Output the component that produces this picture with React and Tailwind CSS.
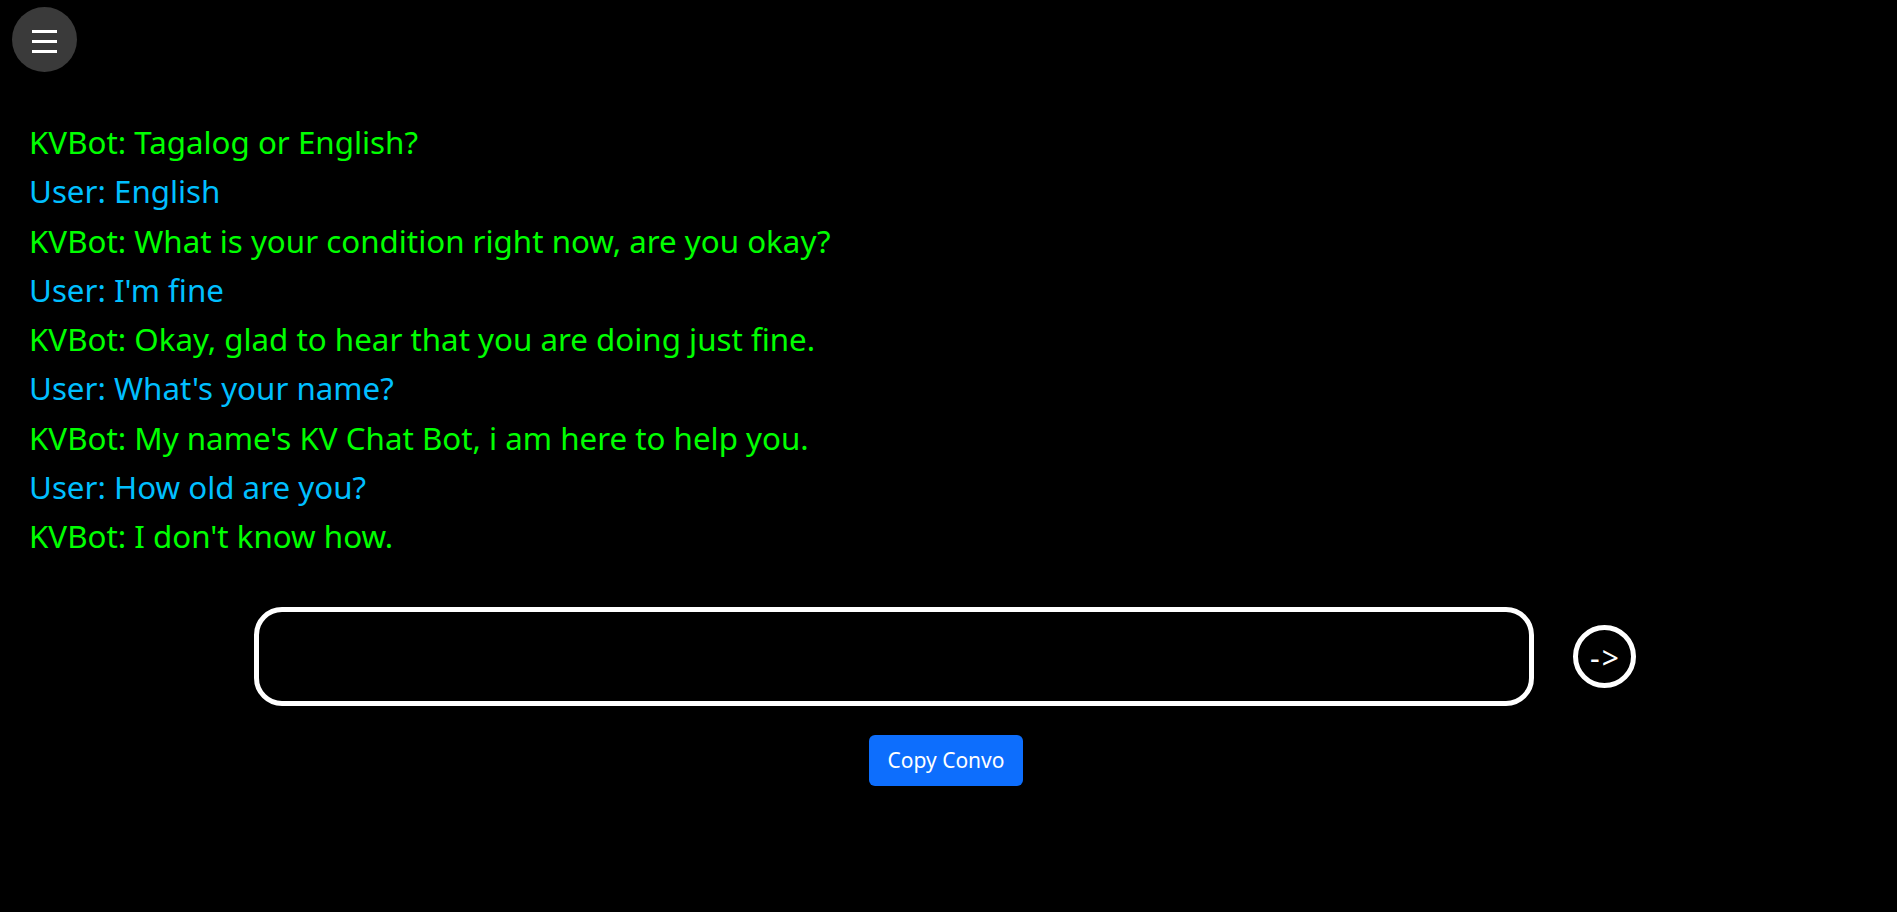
import React from "react";

const messages = [
  { who: "KVBot", text: "Tagalog or English?" },
  { who: "User", text: "English" },
  { who: "KVBot", text: "What is your condition right now, are you okay?" },
  { who: "User", text: "I'm fine" },
  { who: "KVBot", text: "Okay, glad to hear that you are doing just fine." },
  { who: "User", text: "What's your name?" },
  { who: "KVBot", text: "My name's KV Chat Bot, i am here to help you." },
  { who: "User", text: "How old are you?" },
  { who: "KVBot", text: "I don't know how." },
];

export default function App() {
  return (
    <div
      className="min-h-[912px] w-full bg-black"
      style={{ fontFamily: '"Noto Sans", "Open Sans", sans-serif' }}
    >
      <div className="pl-[12px] pt-[7px]">
        <button className="flex h-[65px] w-[65px] flex-col items-center justify-center gap-[7px] rounded-full bg-[#3a3a3a] pt-[4px]">
          <span className="block h-[3px] w-[25px] bg-white" />
          <span className="block h-[3px] w-[25px] bg-white" />
          <span className="block h-[3px] w-[25px] bg-white" />
        </button>
      </div>

      <div className="mt-[46px] pl-[29px]">
        {messages.map((m, i) => (
          <div
            key={i}
            className={`text-[31.3px] leading-[49.25px] ${
              m.who === "KVBot" ? "text-[#00ff00]" : "text-[#00bfff]"
            }`}
          >
            {m.who}: {m.text}
          </div>
        ))}
      </div>

      <div className="mt-[46px] flex items-center justify-center gap-[39px] pr-[8px]">
        <div className="h-[99px] w-[1280px] rounded-[28px] border-[5px] border-white bg-black" />
        <button className="flex h-[63px] w-[63px] items-center justify-center rounded-full border-[5px] border-white bg-black pl-[3px] pt-[2px] text-[30px] leading-none tracking-[2px] text-white">
          -&gt;
        </button>
      </div>

      <div className="mt-[29px] flex justify-center pr-[5px]">
        <button className="h-[51px] rounded-[6px] bg-[#0d6efd] px-[19px] text-[21px] text-white">
          Copy Convo
        </button>
      </div>
    </div>
  );
}
